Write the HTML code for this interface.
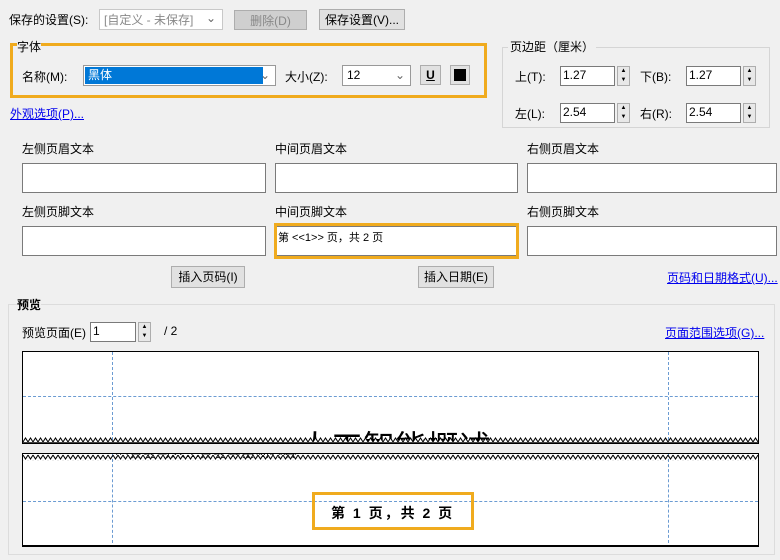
<!DOCTYPE html>
<html><head><meta charset="utf-8"><style>
body{margin:0;width:780px;height:560px;background:#f0f0f0;position:relative;overflow:hidden;font-family:"Liberation Sans","Noto Sans CJK SC",sans-serif;font-size:12px;color:#000}
.a{position:absolute;white-space:nowrap}
.in{position:absolute;background:#fff;border:1px solid #7a7a7a;box-sizing:border-box}
.btn{position:absolute;background:#e1e1e1;border:1px solid #adadad;box-sizing:border-box;text-align:center;line-height:20px}
.ln{color:#0000ee;text-decoration:underline}
.sp{position:absolute;width:13px;height:20px;border:1px solid #adadad;box-sizing:border-box;background:#e8e8e8;font-size:6px;line-height:9px;text-align:center}
.or{position:absolute;border:3px solid #f0ab1e;box-sizing:border-box}
.vd{position:absolute;border-left:1px dashed #6b9bd2;width:0}
.hd{position:absolute;border-top:1px dashed #6b9bd2;height:0}
</style></head><body>
<div class="a" style="left:9px;top:11px">保存的设置(S):</div>
<div class="in" style="left:99px;top:9px;width:124px;height:21px;border-color:#c8c8c8;color:#888;padding:1px 4px">[自定义 - 未保存]<span style="position:absolute;right:6px;color:#666">⌄</span></div>
<div class="btn" style="left:234px;top:10px;width:73px;height:20px;background:#cfcfcf;color:#888">删除(D)</div>
<div class="btn" style="left:319px;top:9px;width:86px;height:21px">保存设置(V)...</div>

<div class="or" style="left:10px;top:43px;width:477px;height:55px"></div>
<div class="a" style="left:17px;top:38px;background:#f0f0f0">字体</div>
<div class="a" style="left:22px;top:68px">名称(M):</div>
<div class="in" style="left:83px;top:65px;width:193px;height:21px;border-color:#999"><div style="position:absolute;left:1px;top:1px;width:175px;height:17px;background:#0078d7;color:#fff;padding-left:3px;line-height:17px">黑体</div><span style="position:absolute;right:5px;top:2px;color:#666">⌄</span></div>
<div class="a" style="left:285px;top:68px">大小(Z):</div>
<div class="in" style="left:342px;top:65px;width:69px;height:21px;border-color:#999;padding:2px 4px">12<span style="position:absolute;right:5px;top:2px;color:#666">⌄</span></div>
<div class="btn" style="left:420px;top:65px;width:21px;height:20px;font-weight:bold;text-decoration:underline;line-height:18px">U</div>
<div class="btn" style="left:450px;top:65px;width:20px;height:20px"><div style="margin:3px;width:12px;height:12px;background:#000"></div></div>
<div class="a ln" style="left:10px;top:105px">外观选项(P)...</div>

<div style="position:absolute;left:502px;top:47px;width:268px;height:81px;border:1px solid #d5d5d5;box-sizing:border-box"></div>
<div class="a" style="left:508px;top:38px;background:#f0f0f0;padding:0 2px">页边距（厘米）</div>
<div class="a" style="left:515px;top:68px">上(T):</div>
<div class="in" style="left:560px;top:66px;width:55px;height:20px;padding:1px 2px">1.27</div>
<div class="sp" style="left:617px;top:66px">▲<br>▼</div>
<div class="a" style="left:640px;top:68px">下(B):</div>
<div class="in" style="left:686px;top:66px;width:55px;height:20px;padding:1px 2px">1.27</div>
<div class="sp" style="left:743px;top:66px">▲<br>▼</div>
<div class="a" style="left:515px;top:105px">左(L):</div>
<div class="in" style="left:560px;top:103px;width:55px;height:20px;padding:1px 2px">2.54</div>
<div class="sp" style="left:617px;top:103px">▲<br>▼</div>
<div class="a" style="left:640px;top:105px">右(R):</div>
<div class="in" style="left:686px;top:103px;width:55px;height:20px;padding:1px 2px">2.54</div>
<div class="sp" style="left:743px;top:103px">▲<br>▼</div>

<div class="a" style="left:22px;top:140px">左侧页眉文本</div>
<div class="a" style="left:275px;top:140px">中间页眉文本</div>
<div class="a" style="left:527px;top:140px">右侧页眉文本</div>
<div class="in" style="left:22px;top:163px;width:244px;height:30px"></div>
<div class="in" style="left:275px;top:163px;width:243px;height:30px"></div>
<div class="in" style="left:527px;top:163px;width:250px;height:30px"></div>
<div class="a" style="left:22px;top:203px">左侧页脚文本</div>
<div class="a" style="left:275px;top:203px">中间页脚文本</div>
<div class="a" style="left:527px;top:203px">右侧页脚文本</div>
<div class="in" style="left:22px;top:226px;width:244px;height:30px"></div>
<div class="in" style="left:275px;top:226px;width:243px;height:30px;font-size:11px;padding:2px 2px">第 &lt;&lt;1&gt;&gt; 页，共 2 页</div>
<div class="or" style="left:274px;top:223px;width:245px;height:36px"></div>
<div class="in" style="left:527px;top:226px;width:250px;height:30px"></div>
<div class="btn" style="left:171px;top:266px;width:74px;height:22px">插入页码(I)</div>
<div class="btn" style="left:418px;top:266px;width:76px;height:22px">插入日期(E)</div>
<div class="a ln" style="left:667px;top:269px">页码和日期格式(U)...</div>

<div style="position:absolute;left:8px;top:304px;width:767px;height:251px;border:1px solid #dcdcdc;box-sizing:border-box"></div>
<div class="a" style="left:17px;top:296px;font-weight:bold;background:#f0f0f0">预览</div>
<div class="a" style="left:22px;top:324px">预览页面(E)</div>
<div class="in" style="left:90px;top:322px;width:46px;height:20px;padding:1px 2px">1</div>
<div class="sp" style="left:138px;top:322px">▲<br>▼</div>
<div class="a" style="left:164px;top:324px">/ 2</div>
<div class="a ln" style="left:665px;top:324px">页面范围选项(G)...</div>

<svg width="0" height="0" style="position:absolute"><defs>
<pattern id="up" width="5" height="6" patternUnits="userSpaceOnUse"><polyline points="0,5 2.5,1 5,5" fill="#fff" stroke="#000" stroke-width="1"/></pattern>
<pattern id="dn" width="5" height="6" patternUnits="userSpaceOnUse"><polyline points="0,1 2.5,5 5,1" fill="#fff" stroke="#000" stroke-width="1"/></pattern>
</defs></svg>

<div style="position:absolute;left:22px;top:351px;width:737px;height:93px;background:#fff;border:1px solid #000;box-sizing:border-box;overflow:hidden">
<div class="vd" style="left:89px;top:0;height:93px"></div><div class="vd" style="left:645px;top:0;height:93px"></div>
<div class="hd" style="left:0;right:0;top:44px"></div>
<div class="a" style="left:276px;top:70px;font-size:32px">人工智能概述</div>
<svg style="position:absolute;left:0;top:85px" width="737" height="8"><rect x="0" y="0" width="737" height="6" fill="url(#up)"/><rect x="0" y="5" width="737" height="3" fill="#fff"/><line x1="0" y1="6" x2="737" y2="6" stroke="#000" stroke-width="1.5"/></svg>
</div>
<div style="position:absolute;left:22px;top:453px;width:737px;height:94px;background:#fff;border:1px solid #000;border-bottom:2px solid #000;box-sizing:border-box;overflow:hidden">
<div class="a" style="left:92px;top:-12px;font-size:14px;color:#333">的智能与人工智能等基础内容</div>
<div class="vd" style="left:89px;top:0;height:94px"></div><div class="vd" style="left:645px;top:0;height:94px"></div>
<div class="hd" style="left:0;right:0;top:47px"></div>
<svg style="position:absolute;left:0;top:0" width="737" height="7"><rect x="0" y="0" width="737" height="7" fill="url(#dn)"/></svg>
<div class="a" style="left:308px;top:49px;font-size:14px;font-weight:bold;letter-spacing:2px">第 1 页，共 2 页</div>
</div>
<div class="or" style="left:312px;top:492px;width:162px;height:38px"></div>
</body></html>
